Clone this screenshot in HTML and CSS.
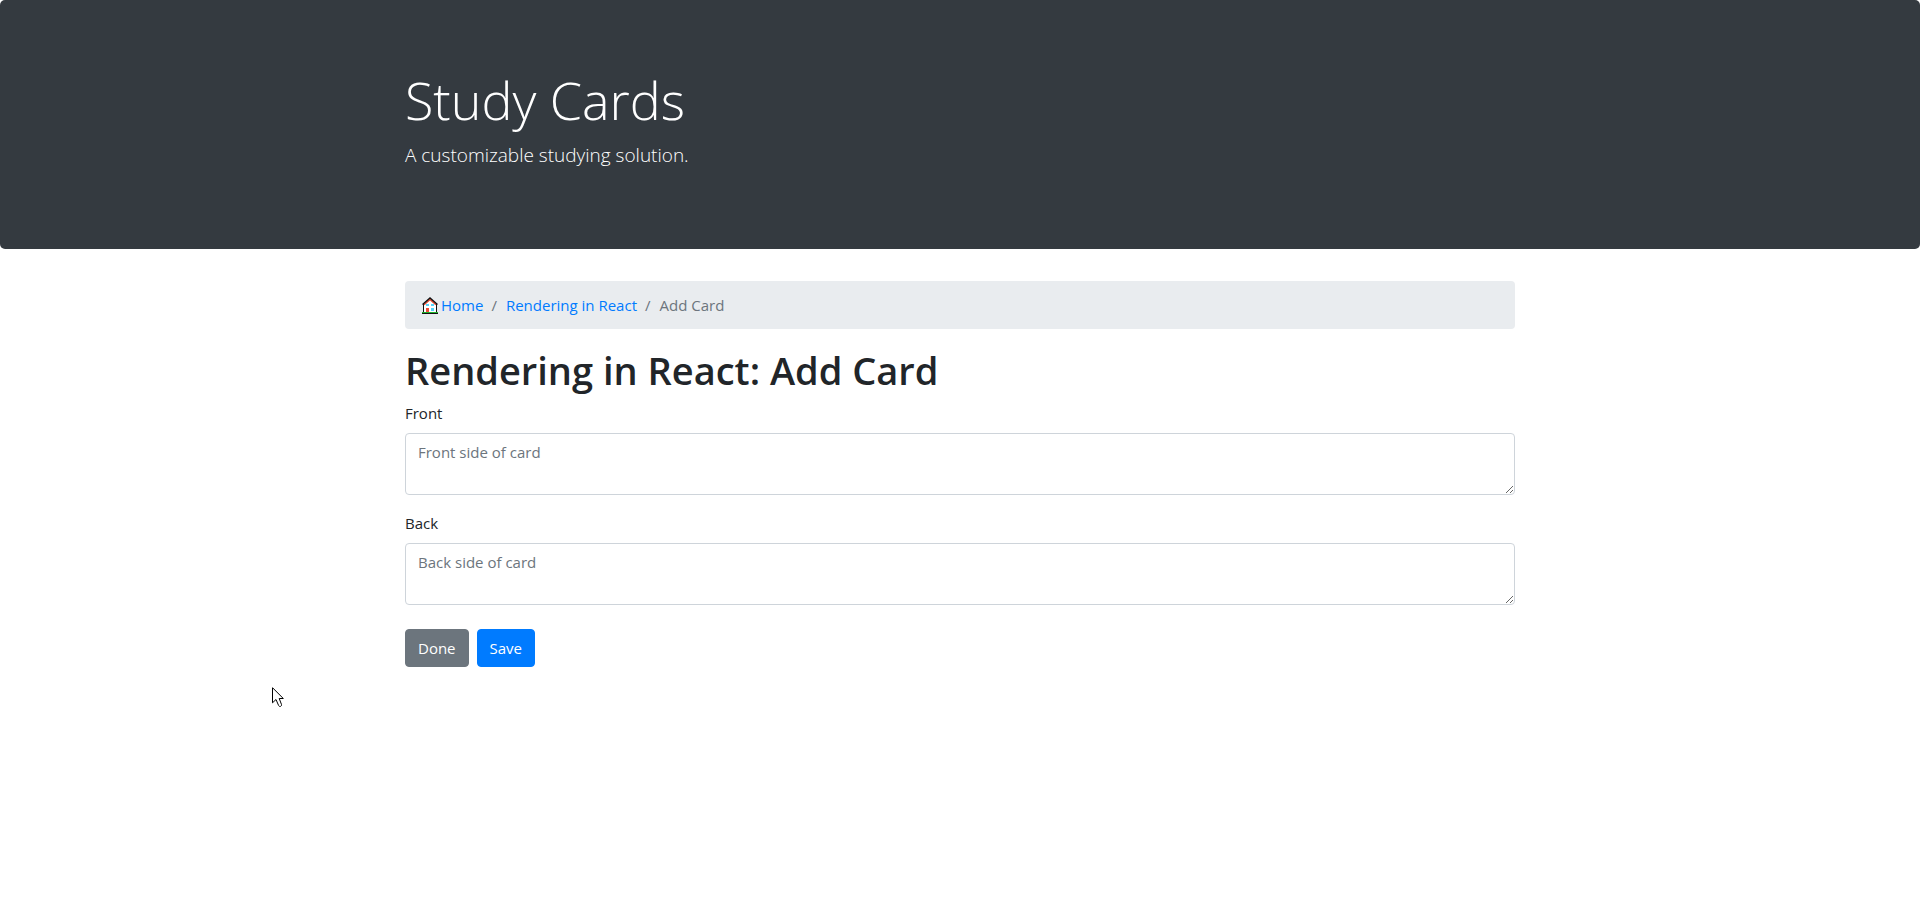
FILE: index.html
```html
<!DOCTYPE html>
<html lang="en">
<head>
<meta charset="utf-8">
<meta name="viewport" content="width=device-width, initial-scale=1">
<title>Study Cards</title>
<link rel="stylesheet" href="styles.css">
</head>
<body>
<header class="jumbotron">
  <div class="container">
    <h1 class="display">Study Cards</h1>
    <p class="lead">A customizable studying solution.</p>
  </div>
</header>
<main class="container">
  <nav aria-label="breadcrumb">
    <ol class="breadcrumb">
      <li class="crumb"><a class="crumb-link" href="#"><svg class="house" viewBox="0 0 16 17" aria-hidden="true"><path fill="#fff" d="M2 7.500 8 2l6 5.500V16H2z"/><path fill="none" stroke="#111" d="M1.500 7v9M14.500 7v9"/><path fill="none" stroke="#e0452c" stroke-width="1.500" d="M2 7.800 8 2.500l6 5.300"/><path fill="none" stroke="#111" stroke-width="1.300" d="M.5 7.500 8 .9l7.500 6.600"/><path fill="#55d4fb" d="M4 7h3v2H4zM9 7h3v2H9zM9 11h3v3H9z"/><path fill="#ed4b38" d="M4 11h3v5H4z"/><path fill="#20b32b" d="M0 15h16v1H0z"/><path fill="#111" d="M0 16h16v1H0z"/></svg>Home</a></li>
      <li class="crumb"><a class="crumb-link" href="#">Rendering in React</a></li>
      <li class="crumb current" aria-current="page">Add Card</li>
    </ol>
  </nav>
  <h2 class="title">Rendering in React: Add Card</h2>
  <form>
    <div class="field">
      <label class="label" for="front">Front</label>
      <textarea class="control" id="front" rows="2" placeholder="Front side of card"></textarea>
    </div>
    <div class="field">
      <label class="label" for="back">Back</label>
      <textarea class="control" id="back" rows="2" placeholder="Back side of card"></textarea>
    </div>
    <div class="actions">
      <button class="btn secondary" type="button">Done</button>
      <button class="btn primary" type="submit">Save</button>
    </div>
  </form>
</main>
<svg class="cursor" viewBox="0 0 12 20" aria-hidden="true"><path fill="#fff" stroke="#000" d="M.5.700v15.100l3.500-3.300 2.600 6 .9.900h1l1-.9v-1L7.200 11.500h4.100z"/></svg>
</body>
</html>
```
FILE: styles.css
```css
*, *::before, *::after { box-sizing: border-box; }
body {
  margin: 0;
  background: #fff;
  color: #212529;
  font: 400 15px/24px "Open Sans", "Noto Sans", sans-serif;
}
.container {
  width: 100%;
  max-width: 1140px;
  margin: 0 auto;
  padding: 0 15px;
}
.jumbotron {
  padding: 64px 32px;
  margin-bottom: 32px;
  background: #343a40;
  color: #fff;
  border-radius: 5px;
}
.display { margin: 0 0 4px; font-size: 52px; font-weight: 300; line-height: 71px; }
.lead { margin: 0 0 14px; font-size: 19px; font-weight: 300; line-height: 32px; }
.breadcrumb {
  display: flex;
  flex-wrap: wrap;
  margin: 0 0 16px;
  padding: 12px 16px;
  list-style: none;
  background: #e9ecef;
  border-radius: 4px;
}
.crumb { display: flex; }
.crumb + .crumb { padding-left: 8px; }
.crumb + .crumb::before { content: "/"; padding-right: 9px; color: #6c757d; }
.crumb-link { display: flex; align-items: center; color: #007bff; text-decoration: none; }
.house { width: 16px; height: 17px; margin: 0 3px 0 1px; }
.current { color: #6c757d; }
.title { margin: 0 0 6px; font-size: 38px; font-weight: 600; line-height: 50px; }
.field { margin-bottom: 16px; }
.label { display: block; margin-bottom: 8px; }
.control {
  display: block;
  width: 100%;
  padding: 6px 12px;
  color: #495057;
  font: inherit;
  background: #fff;
  border: 1px solid #ced4da;
  border-radius: 4px;
  resize: vertical;
}
.control::placeholder { color: #6c757d; opacity: 1; }
.actions { display: flex; gap: 8px; padding-top: 8px; }
.btn {
  padding: 6px 12px;
  font: inherit;
  color: #fff;
  border: 1px solid;
  border-radius: 4px;
  cursor: pointer;
}
.secondary { background: #6c757d; border-color: #6c757d; }
.primary { background: #007bff; border-color: #007bff; }
.cursor { position: absolute; left: 272px; top: 687px; width: 12px; height: 20px; }
```
